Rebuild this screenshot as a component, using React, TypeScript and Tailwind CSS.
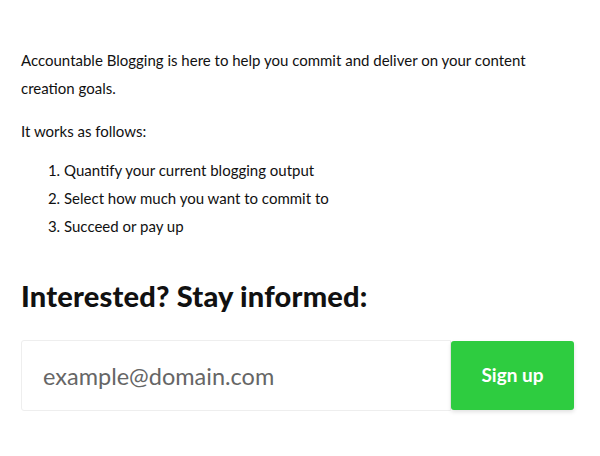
import React, { useState } from "react";

const App: React.FC = () => {
  const [email, setEmail] = useState<string>("");

  return (
    <div className="w-[600px] h-[456px] bg-white text-[#111] font-['Lato','Noto_Sans',sans-serif] overflow-hidden">
      <div className="pl-[21px] pr-[27px] pt-[46px]">
        <p className="text-[15px] leading-[28px]">
          Accountable Blogging is here to help you commit and deliver on your content creation goals.
        </p>
        <p className="text-[15px] leading-[28px] mt-[15px]">It works as follows:</p>
        <ol className="list-decimal pl-[43px] mt-[11px] text-[15px] leading-[28px]">
          <li>Quantify your current blogging output</li>
          <li>Select how much you want to commit to</li>
          <li>Succeed or pay up</li>
        </ol>

        <h2 className="mt-[40px] text-[29px] font-black leading-[32px] tracking-[0.2px]">
          Interested? Stay informed:
        </h2>

        <form
          className="mt-[28px] flex w-[553px]"
          onSubmit={(e) => e.preventDefault()}
        >
          <input
            type="email"
            value={email}
            onChange={(e) => setEmail(e.target.value)}
            placeholder="example@domain.com"
            className="flex-1 h-[71px] border border-[#eeeeee] rounded-l-[3px] px-[21px] text-[23.5px] text-[#555] placeholder:text-[#666] outline-none"
          />
          <button
            type="submit"
            className="w-[123px] h-[69px] mt-px bg-[#2ecc40] text-white font-bold text-[19px] rounded-[3px] shadow-[0_2px_4px_rgba(0,0,0,0.12)]"
          >
            Sign up
          </button>
        </form>
      </div>
    </div>
  );
};

export default App;
